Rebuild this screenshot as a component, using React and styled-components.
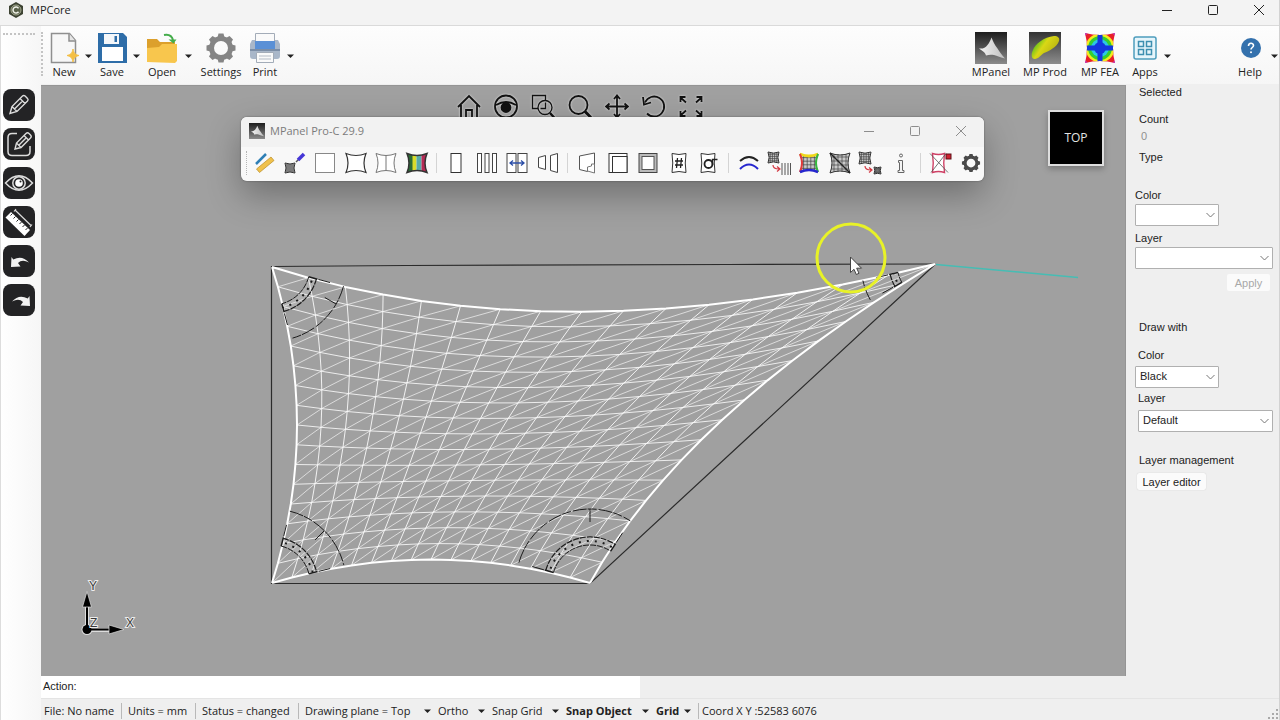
import React from "react";
import styled, { createGlobalStyle, css } from "styled-components";

const ui = `"Open Sans", "Noto Sans", sans-serif`;
const classic = `"Liberation Sans", Arial, sans-serif`;

const GlobalStyle = createGlobalStyle`
  *, *::before, *::after { box-sizing: border-box; }
  body { margin: 0; background: #efefef; color: #222; font: 11px/16px ${ui}; }
  button, select, input { font: inherit; color: inherit; margin: 0; }
  svg { display: block; flex: none; }
`;

const reset = css`
  border: 0;
  padding: 0;
  background: none;
`;

const Shell = styled.div`
  min-height: 100vh;
  display: flex;
  flex-direction: column;
  border-right: 1px solid #d2d2d2;
`;

/* ---------- title bar ---------- */
const TitleBar = styled.header`
  height: 26px;
  padding: 0 0 6px 8px;
  display: flex;
  align-items: center;
  gap: 6px;
  background: #f3f3f3;
  border-bottom: 1px solid #dadada;
`;
const AppTitle = styled.h1`
  flex: 1;
  margin: 0;
  font: 11px/16px ${ui};
`;
const WindowButton = styled.button`
  ${reset}
  width: 46px;
  height: 18px;
  display: grid;
  place-items: center;
  color: ${(p) => (p.$muted ? "#8d8d8d" : "#222")};
`;
const WindowButtons = styled.div`
  display: flex;
  margin-right: ${(p) => p.$inset || 0}px;
`;

/* ---------- frame ---------- */
const Frame = styled.div`
  flex: 1;
  display: flex;
`;
const Rail = styled.nav`
  flex: none;
  width: 41px;
  padding: 7px 0 0 2px;
  background: linear-gradient(90deg, #fff, #f6f6f6);
  border-left: 1px solid #ddd;
  display: flex;
  flex-direction: column;
  gap: 7px;
`;
const RailGrip = styled.div`
  width: 32px;
  height: 49px;
  border-top: 2px dotted #c4c4c4;
`;
const RailButton = styled.button`
  ${reset}
  width: 32px;
  height: 32px;
  border-radius: 8px;
  background: #232325;
  color: #dcdcdc;
  display: grid;
  place-items: center;
`;
const Main = styled.main`
  flex: 1;
  min-width: 0;
  display: flex;
  flex-direction: column;
`;

/* ---------- ribbon ---------- */
const Ribbon = styled.div`
  height: 58px;
  display: flex;
  align-items: flex-start;
  padding-top: 6px;
  background: linear-gradient(#fdfdfd, #f6f6f6);
`;
const RibbonGrip = styled.div`
  width: 5px;
  height: 44px;
  border-left: 2px dotted #c4c4c4;
`;
const RibbonButton = styled.button`
  ${reset}
  flex: none;
  width: ${(p) => p.$w}px;
  display: flex;
  flex-direction: column;
  align-items: center;
  white-space: nowrap;
  line-height: 16px;
`;
const DropButton = styled.button`
  ${reset}
  flex: none;
  width: ${(p) => p.$w || 12}px;
  height: 48px;
  display: grid;
  place-items: center;
`;
const Spacer = styled.div`
  flex: 1;
`;
const HelpGroup = styled.div`
  display: flex;
  margin-left: 58px;
`;

/* ---------- work area ---------- */
const Work = styled.div`
  flex: 1;
  display: flex;
`;
const Canvas = styled.section`
  flex: 1;
  min-width: 0;
  position: relative;
  overflow: hidden;
  margin-top: 1px;
  background: #a0a0a0;
  border-top: 1px solid #959595;
  border-right: 1px solid #959595;
`;
const Drawing = styled.svg`
  position: absolute;
  inset: -1px 0 0 0;
  width: 1085px;
  height: 591px;
`;
const ViewTools = styled.div`
  position: absolute;
  left: 409px;
  top: 8px;
  display: flex;
  filter: drop-shadow(0 0 1px #e4e4e4);
`;
const ViewButton = styled.button`
  ${reset}
  width: 37px;
  height: 26px;
  display: grid;
  place-items: center;
  color: #111;
`;
const ViewCube = styled.button`
  ${reset}
  position: absolute;
  top: 24px;
  right: 21px;
  width: 56px;
  height: 56px;
  border: 2px solid #dedede;
  background: #000;
  color: #e4e4e4;
  font: 12px/16px ${ui};
  box-shadow: 0 3px 6px rgba(0, 0, 0, 0.25);
`;
const Palette = styled.section`
  position: absolute;
  left: 200px;
  top: 31px;
  width: 743px;
  border-radius: 6px;
  overflow: hidden;
  background: #f8f8f8;
`;
const PaletteShadow = styled.div`
  position: absolute;
  left: 200px;
  top: 31px;
  width: 743px;
  height: 64px;
  border-radius: 6px;
  box-shadow: 0 0 2px rgba(0, 0, 0, 0.4), 0 14px 34px rgba(0, 0, 0, 0.3);
`;
const PaletteTitle = styled.div`
  height: 30px;
  padding: 0 0 2px 8px;
  display: flex;
  align-items: center;
  gap: 5px;
  background: #f2f2f2;
  color: #7b7b7b;
`;
const PaletteName = styled.h2`
  flex: 1;
  margin: 0;
  font: 11px/16px ${ui};
`;
const PaletteTools = styled.div`
  height: 34px;
  display: flex;
  align-items: center;
  margin-right: -2px;
  padding: 0 0 2px 5px;
`;
const PaletteGrip = styled.div`
  width: 3px;
  height: 24px;
  border-left: 1px dotted #b5b5b5;
`;
const PaletteButton = styled.button`
  ${reset}
  flex: 1;
  height: 28px;
  display: grid;
  place-items: center;
`;
const Divider = styled.div`
  width: 1px;
  height: 20px;
  margin: 0 4px;
  background: #d4d4d4;
`;

/* ---------- properties ---------- */
const Properties = styled.aside`
  flex: none;
  width: 153px;
  padding: 0 6px 0 9px;
  font: 11px/16px ${classic};
  background: #efefef;
`;
const Group = styled.fieldset`
  border: 0;
  margin: 0;
  padding: 0;
  display: flex;
  flex-direction: column;
  align-items: flex-start;
  min-width: 0;
  min-height: ${(p) => p.$h}px;
`;
const GroupName = styled.legend`
  padding: 0;
  margin: 0 0 ${(p) => p.$gap}px 4px;
`;
const FieldLabel = styled.label`
  margin-left: ${(p) => p.$indent || 0}px;
  margin-top: ${(p) => p.$top || 0}px;
`;
const Value = styled.output`
  margin: 1px 0 5px 6px;
  color: #909090;
`;
const Picker = styled.div`
  position: relative;
  align-self: ${(p) => (p.$wide ? "stretch" : "flex-start")};
  width: ${(p) => (p.$wide ? "auto" : "84px")};
  margin-top: ${(p) => p.$top}px;
  margin-left: ${(p) => p.$indent || 0}px;
`;
const PickerSelect = styled.select`
  appearance: none;
  display: block;
  width: 100%;
  height: 22px;
  padding: 0 16px 2px 4px;
  border: 1px solid #b0b0b0;
  border-radius: 1px;
  background: #fff;
`;
const PickerChevron = styled.svg`
  position: absolute;
  right: 4px;
  top: 8px;
  pointer-events: none;
`;
const PanelButton = styled.button`
  ${reset}
  height: 17px;
  line-height: 16px;
  width: ${(p) => p.$w}px;
  border-radius: 2px;
  background: #fbfbfb;
  box-shadow: 0 0 1px #bbb;
  align-self: ${(p) => (p.$end ? "flex-end" : "flex-start")};
  margin: ${(p) => (p.$end ? "5px 3px 0 0" : "0 0 0 2px")};
  &:disabled { color: #a8a8a8; box-shadow: none; }
`;

/* ---------- bottom bars ---------- */
const ActionRow = styled.div`
  height: 23px;
  display: flex;
  border-bottom: 1px solid #e4e4e4;
  font: 11px/16px ${classic};
`;
const ActionBox = styled.div`
  width: 599px;
  padding: 2px 2px;
  display: flex;
  gap: 4px;
  background: #fff;
`;
const ActionInput = styled.input`
  ${reset}
  flex: 1;
  outline: 0;
`;
const StatusBar = styled.footer`
  height: 21px;
  padding-top: 2px;
  display: flex;
  align-items: center;
  white-space: nowrap;
`;
const StatusCell = styled.div`
  flex: none;
  width: ${(p) => p.$w}px;
  padding-left: ${(p) => p.$pad}px;
  ${(p) => p.$line && "border-right: 1px solid #b9b9b9;"}
`;
const StatusDrop = styled.button`
  ${reset}
  flex: none;
  width: ${(p) => p.$w}px;
  padding-right: 7px;
  display: flex;
  align-items: center;
  justify-content: space-between;
  font-weight: ${(p) => (p.$bold ? 700 : 400)};
`;
const StatusDrops = styled.div`
  display: flex;
  padding-left: 6px;
  border-right: 1px solid #b9b9b9;
`;
const SizeGrip = styled.svg`
  align-self: flex-end;
  margin-left: auto;
`;

/* ---------- small glyphs ---------- */
const Caret = () => (
  <svg width="7" height="4" viewBox="0 0 7 4"><path d="M0 0.500h7L3.500 4z" fill="#222" /></svg>
);
const MinGlyph = () => (
  <svg width="12" height="12" viewBox="0 0 12 12"><path d="M1 6.500h10" stroke="currentColor" /></svg>
);
const MaxGlyph = () => (
  <svg width="12" height="12" viewBox="0 0 12 12"><rect x="1.500" y="1.500" width="9" height="9" rx="1" fill="none" stroke="currentColor" /></svg>
);
const CloseGlyph = () => (
  <svg width="12" height="12" viewBox="0 0 12 12"><path d="M1 1l10 10M11 1L1 11" stroke="currentColor" /></svg>
);
const WindowControls = ({ muted, inset }) => (
  <WindowButtons $inset={inset}>
    <WindowButton $muted={muted} aria-label="Minimize"><MinGlyph /></WindowButton>
    <WindowButton $muted={muted} aria-label="Maximize"><MaxGlyph /></WindowButton>
    <WindowButton $muted={muted} aria-label="Close"><CloseGlyph /></WindowButton>
  </WindowButtons>
);
const Gear = ({ size, color }) => (
  <svg width={size} height={size} viewBox="0 0 32 32">
    <circle cx="16" cy="16" r="9.500" fill="none" stroke={color} strokeWidth="5" />
    {[0, 45, 90, 135, 180, 225, 270, 315].map((a) => (
      <path key={a} d="M12.500 5.500l1-4h5l1 4z" fill={color} transform={`rotate(${a} 16 16)`} />
    ))}
  </svg>
);
const LogoIcon = () => (
  <svg width="16" height="16" viewBox="0 0 16 16">
    <path d="M8 0l7 4v8l-7 4-7-4V4z" fill="#3c4232" />
    <circle cx="8" cy="8" r="5" fill="#59614a" stroke="#a3a88f" />
    <path d="M10.500 6.300a3 3 0 1 0 0 3.400" fill="none" stroke="#f2f3ea" strokeWidth="1.500" />
  </svg>
);
const MPanelIcon = ({ size }) => (
  <svg width={size} height={size} viewBox="0 0 32 32">
    <defs>
      <linearGradient id="mpbg" x1="0" y1="0" x2="0" y2="1"><stop offset="0" stopColor="#1d1d1d" /><stop offset="1" stopColor="#8b8b8b" /></linearGradient>
      <linearGradient id="mpsail" x1="0" y1="0" x2="1" y2="0"><stop offset="0" stopColor="#f5f5f5" /><stop offset="1" stopColor="#bdbdbd" /></linearGradient>
    </defs>
    <rect width="32" height="32" fill="url(#mpbg)" />
    <path d="M16.500 5.500c1.500 3.500 3 7.500 6 11 2 3.500 4.500 6.500 7.500 10-4-1-8-2.500-11-3.500-3-.5-5-.5-8 .5-.5-2-1.500-3-3.500-4.500L4 16.500c4 .5 6-.5 8.500-3.500 2-2.500 3-5 4-7.500z" fill="url(#mpsail)" />
  </svg>
);

/* ---------- ribbon icons ---------- */
const NewIcon = () => (
  <svg width="32" height="32" viewBox="0 0 32 32">
    <path d="M3.500 1.500h18l6 7v22h-24z" fill="#f7f7f7" stroke="#8f8f8f" strokeWidth="1.500" />
    <path d="M21 1.500v7.500h6.500" fill="#e6e6e6" stroke="#8f8f8f" strokeWidth="1.500" />
    <path d="M25 17c.8 4 2 5.500 6 6.500-4 1-5.200 2.500-6 6.500-.8-4-2-5.500-6-6.500 4-1 5.200-2.500 6-6.500z" fill="#f4bf45" stroke="#f4bf45" />
  </svg>
);
const SaveIcon = () => (
  <svg width="32" height="32" viewBox="0 0 32 32">
    <path d="M2 1h25l4 4v26H2z" fill="#2e6da8" />
    <path d="M8 2h15v10H8z" fill="#f4f7fa" />
    <path d="M18.500 4H21v6h-2.500z" fill="#2e6da8" />
    <path d="M6 15h21v14H6z" fill="#fff" />
  </svg>
);
const OpenIcon = () => (
  <svg width="32" height="32" viewBox="0 0 32 32">
    <path d="M1 7h10l3 3h15v20H1z" fill="#dca02c" />
    <path d="M1 30V16l12-1 3-3h15v17l-2 2z" fill="#f8c64d" />
    <path d="M18 3c5-1 8 1 9 5" fill="none" stroke="#45ad4b" strokeWidth="2" />
    <path d="M22.500 7.500h8l-3 4z" fill="#45ad4b" />
  </svg>
);
const PrintIcon = () => (
  <svg width="32" height="32" viewBox="0 0 32 32">
    <path d="M3 8h26l2 4v12q0 3-3 3H4q-3 0-3-3V12z" fill="#a9b7c9" />
    <path d="M1 17h30v2H1z" fill="#7c8ea6" />
    <path d="M6.500 1.500h19V10h-19z" fill="#fafafa" stroke="#a3acb8" />
    <path d="M6 9h20v8H6z" fill="#5a90d6" />
    <path d="M7.500 20.500h17v10h-17z" fill="#fafafa" stroke="#a3acb8" />
    <path d="M10 24h12M10 27h12" stroke="#b5bcc6" />
  </svg>
);
const ProdIcon = () => (
  <svg width="32" height="32" viewBox="0 0 32 32">
    <defs>
      <linearGradient id="pbg" x1="0" y1="0" x2="0" y2="1"><stop offset="0" stopColor="#333" /><stop offset="1" stopColor="#8d8d8d" /></linearGradient>
      <linearGradient id="pfill" x1="0" y1="0" x2="1" y2="0.600"><stop offset="0.150" stopColor="#35b81e" /><stop offset="0.500" stopColor="#d9d815" /><stop offset="1" stopColor="#b3ad12" /></linearGradient>
    </defs>
    <rect width="32" height="32" fill="url(#pbg)" />
    <path d="M4 18c2-6 11-13 21-14 4 0 6 2 5 5-2 6-10 10-15 12-3 2-6 6-9 6-4 0-4-5-2-9z" fill="url(#pfill)" />
  </svg>
);
const FeaIcon = () => (
  <svg width="32" height="32" viewBox="0 0 32 32">
    <defs>
      <clipPath id="feaClip"><path d="M1 1q15 4 30 0-4 15 0 30-15-4-30 0 4-15 0-30z" /></clipPath>
    </defs>
    <g clipPath="url(#feaClip)">
      <rect width="32" height="32" fill="#e8202a" />
      <circle cx="16" cy="16" r="14.500" fill="#f3ec1c" />
      <circle cx="16" cy="16" r="12" fill="#35cf30" />
      <circle cx="16" cy="16" r="9" fill="#2cc7e6" />
      <circle cx="16" cy="16" r="6" fill="#1437e0" />
      <path d="M16 0v32M0 16h32" stroke="#1437e0" strokeWidth="5" />
      <path d="M0 0h5L0 5zM32 0v5l-5-5zM0 32v-5l5 5zM32 32h-5l5-5z" fill="#c03ac0" />
    </g>
  </svg>
);
const AppsIcon = () => (
  <svg width="32" height="32" viewBox="0 0 32 32" fill="none" stroke="#3d8fb0">
    <rect x="5" y="5" width="22" height="22" rx="2" fill="#e6f5fb" stroke="#4e9dbd" strokeWidth="1.500" />
    <g strokeWidth="1.500"><rect x="9.500" y="9.500" width="5" height="5" /><rect x="17.500" y="9.500" width="5" height="5" /><rect x="9.500" y="17.500" width="5" height="5" /><rect x="17.500" y="17.500" width="5" height="5" /></g>
  </svg>
);
const HelpIcon = () => (
  <svg width="32" height="32" viewBox="0 0 32 32">
    <circle cx="17" cy="16" r="10" fill="#3471ad" />
    <path d="M14.500 14c0-3.500 5-3.500 5-.5 0 2-2.500 2-2.500 4" fill="none" stroke="#fff" strokeWidth="1.600" />
    <circle cx="17" cy="20.300" r="1" fill="#fff" />
  </svg>
);

/* ---------- rail icons ---------- */
const pencil = "M-8 8l1.500-6L3-7.500q1.500-1.500 3 0l1.500 1.500q1.500 1.500 0 3L-2 6.500zM-6.500 2L-2 6.500M1-5.500L5.500-1";
const RailIcons = [
  ["Draw", <g key="a" transform="translate(16 15.500)" fill="none" stroke="currentColor" strokeWidth="1.400"><path d="M-9 9l2-7L3.500-8.500q1.300-1.200 2.600 0l2.400 2.400q1.200 1.300 0 2.600L-2 7zM-7 2l5 5M1-6l5 5M-4.500 4.500L3.500-3.500" /></g>],
  ["Edit", <g key="b" fill="none" stroke="currentColor"><path d="M14 5.500H9Q5 5.500 5 9.500v14q0 4 4 4h14q4 0 4-4V18" strokeWidth="1.500" /><g transform="translate(20 13)" strokeWidth="1.400"><path d={pencil} /><path d="M-4.200 4.200L3-3" /></g></g>],
  ["Show", <g key="c" fill="none" stroke="currentColor"><path d="M2.500 16Q16 1.500 29.500 16 16 30.500 2.500 16z" strokeWidth="1.500" /><circle cx="16" cy="16" r="6.200" strokeWidth="1.500" /><circle cx="16" cy="16" r="3.800" fill="#fff" stroke="none" /><circle cx="17.500" cy="14.500" r="1" fill="#222" stroke="none" /></g>],
  ["Measure", <g key="d"><path d="M2.500 11.500L8 6 27 24 21.500 30z" fill="#fff" /><path d="M9.500 7.500l-2 2M12.500 10.500l-2 2M15.500 13.500l-2 2M18.500 16l-2 2M21.500 19l-2 2M24.500 22l-2 2" stroke="#232325" strokeWidth="1" /><path d="M12 4l16 15.500M11 5.500l2-2.500M27 21l2-2.500" stroke="currentColor" fill="none" strokeWidth="1.200" /></g>],
  ["Undo", <path key="e" d="M8.500 12l1.800 2.600q8.500-5 15.700 2.900-7-3.500-11 .5l2.500 3.500-9.500.5z" fill="#f2f2f2" />],
  ["Redo", <path key="f" d="M26.500 12l-1.800 2.600q-8.500-5-15.700 2.900 7-3.500 11 .5l-2.500 3.500 9.500.5z" fill="#f2f2f2" />],
];

/* ---------- view icons ---------- */
const ViewIcons = [
  ["Home", <g key="a"><path d="M1 13L12 2l11 11M4 11v14h16V11" /><path d="M9 25v-9h6v9" /></g>],
  ["Orbit", <g key="b"><circle cx="12" cy="12.500" r="11" /><path d="M2 11q10-6 20 0" /><circle cx="12" cy="13.500" r="4.500" fill="currentColor" /></g>],
  ["Zoom window", <g key="c" strokeWidth="1.300"><path d="M7 14.500H1.500V1.500H14.500V6" /><circle cx="14" cy="13.500" r="7" /><path d="M9.500 14.500h5v-6" /><path d="M19 19l4.500 5" strokeWidth="2.500" /></g>],
  ["Zoom", <g key="d"><circle cx="10.500" cy="11" r="9" /><path d="M17 17.500l6.500 6.500" strokeWidth="3" /></g>],
  ["Pan", <g key="e"><path d="M12 2v21M1.500 12.500h21M9 5l3-3.500L15 5M9 20l3 3.500 3-3.500M4.500 9.500l-3.500 3 3.500 3M19.500 9.500l3.500 3-3.500 3" /></g>],
  ["Rotate", <g key="f"><path d="M3 8.500A10 10 0 1 1 5 19.500" /><path d="M1 3l1 7.500 7-2" /></g>],
  ["Zoom extents", <g key="g"><path d="M1.500 8V3h5M1.500 3.500L7 8.500M22.500 8V3h-5M22.500 3.500L17 8.500M1.500 17v5h5M1.500 21.500L7 16.500M22.500 17v5h-5M22.500 21.500L17 16.500" /></g>],
];

/* ---------- palette icons ---------- */
const grid = (x, y, s) => (
  <>
    <path d={`M${x} ${y}q${s / 2} ${s / 5} ${s} 0-${s / 5} ${s / 2} 0 ${s}-${s / 2}-${s / 5}-${s} 0 ${s / 5}-${s / 2} 0-${s}z`} fill="#c9c9c9" stroke="#333" />
    <path d={[1, 2, 3, 4].map((i) => `M${x + (s * i) / 5} ${y + 1}v${s - 2}M${x + 1} ${y + (s * i) / 5}h${s - 2}`).join("")} stroke="#444" strokeWidth="0.700" fill="none" />
  </>
);
const sail = "M1 1.500q10 4 20 0-4 9.500 0 19-10-4-20 0 4-9.500 0-19z";
const D = "divider";
const PaletteIcons = [
  ["Measure", <g key="1"><path d="M3 12L13 2" stroke="#2f7fb5" strokeWidth="2.500" /><path d="M3.500 17L18 5l3 3.500L6.500 20.500z" fill="#f0c14c" stroke="#b98d25" strokeWidth="0.700" /></g>],
  ["Draw mesh", <g key="2">{grid(1, 11, 10)}<path d="M12 10l3-3" stroke="#555" strokeWidth="1.500" /><path d="M14 8l6-6" stroke="#4536d6" strokeWidth="3.500" /></g>],
  ["Flat panel", <rect key="3" x="1.500" y="1.500" width="19" height="19" fill="#fff" stroke="#888" />],
  ["Sail", <path key="4" d={sail} fill="#fff" stroke="#333" strokeWidth="1.200" />],
  ["Split sail", <g key="5"><path d={sail} fill="#fff" stroke="#777" /><path d="M11 3.500v15" stroke="#777" /></g>],
  ["Colour sail", <g key="6"><clipPath id="cs"><path d={sail} /></clipPath><g clipPath="url(#cs)"><path d="M0 0h7v22H0z" fill="#2b6a36" /><path d="M6.500 0h4v22h-4z" fill="#d9dc2a" /><path d="M10.500 0h5v22h-5z" fill="#58aaa8" /><path d="M15.500 0h7v22h-7z" fill="#b52a55" /></g><path d={sail} fill="none" stroke="#333" strokeWidth="1.500" /></g>],
  D,
  ["Panel", <rect key="7" x="6" y="1.500" width="10" height="19" fill="#fff" stroke="#333" />],
  ["Panels", <g key="8" fill="#fff" stroke="#444"><rect x="1.500" y="1.500" width="4" height="19" /><rect x="9" y="1.500" width="4" height="19" /><rect x="16.500" y="1.500" width="4" height="19" /></g>],
  ["Join panels", <g key="9"><g fill="#fff" stroke="#444"><rect x="1" y="1.500" width="9" height="19" /><rect x="12" y="1.500" width="9" height="19" /></g><path d="M4 11h14M7 8.500L4 11l3 2.500M15 8.500l3 2.500-3 2.500" fill="none" stroke="#2c4fa8" strokeWidth="1.300" /></g>],
  ["Mirror panels", <g key="10" fill="#fff" stroke="#444"><path d="M1.500 5.500l7-2v14l-7-2zM13.500 3.500l7-2v19l-7-2z" /></g>],
  D,
  ["Corner", <g key="11"><path d="M3.500 4l15-3v12l-7 6.500-8-2z" fill="#fff" stroke="#555" /><path d="M18.500 12v9l-7-2v-4l4-1v-2z" fill="#fff" stroke="#777" /></g>],
  ["Hem", <g key="12" fill="#fff" stroke="#333"><rect x="2" y="1.500" width="18" height="19" /><rect x="5.500" y="4.500" width="14.500" height="16" /></g>],
  ["Offset", <g key="13"><rect x="2" y="1.500" width="18" height="19" fill="#bbb" stroke="#444" /><rect x="5" y="4.500" width="12" height="13" fill="#fff" stroke="#555" /></g>],
  ["Number", <g key="14"><path d="M4 1.500q7 2 14 0-1.500 9.500 0 19-7-2-14 0 1.500-9.500 0-19z" fill="#fff" stroke="#333" /><path d="M9.500 6l-1 10M13.500 6l-1 10M7 9h8M7 13h8" stroke="#222" strokeWidth="1.300" /></g>],
  ["Orientation", <g key="15"><path d="M3 1.500q7 2 14 0-1.500 9.500 0 19-7-2-14 0 1.500-9.500 0-19z" fill="#fff" stroke="#333" /><circle cx="10.500" cy="12" r="4" fill="none" stroke="#222" strokeWidth="1.800" /><path d="M14.500 13V7.500h5" stroke="#222" strokeWidth="1.500" fill="none" /></g>],
  D,
  ["Curves", <g key="16" fill="none" strokeWidth="2"><path d="M2 9q9-8 18 0" stroke="#222" /><path d="M2 17q9-9 18 0" stroke="#2626cf" /></g>],
  ["Flatten", <g key="17">{grid(0, 0, 11)}<path d="M5 13q0 4 6 4M9 14.500l3 2.500-3 2.500" stroke="#d33a44" fill="none" strokeWidth="1.200" /><path d="M14 11v12M17 11v12M20 11v12M22.500 11v12" stroke="#555" /></g>],
  ["Stress", <g key="18">{grid(2, 2, 18)}<path d="M2 2q9 4 18 0" stroke="#f0d818" strokeWidth="3" fill="none" /><path d="M2 2q4 9 0 18" stroke="#e23a3a" strokeWidth="2" fill="none" /><path d="M20 2q-4 9 0 18" stroke="#37b83f" strokeWidth="2" fill="none" /><path d="M2 20q9-4 18 0" stroke="#2626cf" strokeWidth="2.500" fill="none" /></g>],
  ["Mesh", <g key="19">{grid(1, 1, 20)}<path d="M1 1l20 20" stroke="#222" strokeWidth="1.500" /></g>],
  ["Convert", <g key="20">{grid(0, 0, 12)}{grid(15, 15, 7)}<path d="M6 14q0 4 6 4M10 15.500l3 2.500-3 2.500" stroke="#d33a44" fill="none" strokeWidth="1.200" /></g>],
  ["Information", <g key="21" fill="#f4f4f4" stroke="#666"><circle cx="11" cy="3.500" r="1.500" /><path d="M8.500 8.500h4v10h1.500v2H8v-2h1.500v-8h-1z" /></g>],
  D,
  ["Delete mesh", <g key="22"><path d="M3.500 1.500q6 2 12 0-1.500 9.500 0 19-6-2-12 0 1.500-9.500 0-19z" fill="#fff" stroke="#cf4065" strokeWidth="1.400" /><path d="M1 1.500l18 19M17 1.500L2 20.500" stroke="#555" strokeWidth="0.800" /><rect x="17" y="2" width="5" height="5" fill="#cf2130" stroke="#5c1018" /></g>],
];

/* ---------- sail drawing ---------- */
const N = 16;
const TL = [272, 267];
const TR = [935, 264];
const BR = [590, 583];
const BL = [272, 583];
const curve = (a, c, b) => (t) => [0, 1].map((k) => (1 - t) ** 2 * a[k] + 2 * t * (1 - t) * c[k] + t * t * b[k]);
const top = curve(TL, [560, 358], TR);
const bottom = curve(BL, [431, 536], BR);
const left = curve(TL, [322, 425], BL);
const right = curve(TR, [682, 416], BR);
const node = (i, j) => {
  const u = i / N;
  const v = j / N;
  const [a, b, c, d] = [top(u), bottom(u), left(v), right(v)];
  return [0, 1]
    .map((k) =>
      (1 - v) * a[k] + v * b[k] + (1 - u) * c[k] + u * d[k] -
      ((1 - u) * (1 - v) * TL[k] + u * (1 - v) * TR[k] + (1 - u) * v * BL[k] + u * v * BR[k]))
    .map((n) => n.toFixed(1))
    .join(" ");
};
const steps = Array.from({ length: N + 1 }, (_, i) => i);
const line = (points) => `M${points.join("L")}`;
const columns = steps.slice(1, N).map((i) => line(steps.map((j) => node(i, j)))).join("");
const rows = steps.slice(1, N).map((j) => line(steps.map((i) => node(i, j)))).join("");
const diagonals = steps.slice(0, N).map((i) => steps.slice(0, N).map((j) => line([node(i, j + 1), node(i + 1, j)])).join("")).join("");
const outline = [
  line(steps.map((i) => node(i, 0))), line(steps.map((i) => node(i, N))),
  line(steps.map((j) => node(0, j))), line(steps.map((j) => node(N, j))),
].join("");

const polar = ([x, y], r, deg) => {
  const a = (deg * Math.PI) / 180;
  return `${(x + r * Math.cos(a)).toFixed(1)} ${(y + r * Math.sin(a)).toFixed(1)}`;
};
const arc = (c, r, from, to) => `M${polar(c, r, from)}A${r} ${r} 0 0 1 ${polar(c, r, to)}`;
const Reinforcement = ({ at, from, to, tick }) => (
  <g fill="none" stroke="#1c1c1c">
    <path d={arc(at, 42, from, to)} stroke="#d8d8d8" strokeOpacity="0.300" strokeWidth="7" />
    <path d={arc(at, 74, from, to)} strokeDasharray="14 1 9 2" />
    <path d={arc(at, 46, from, to)} strokeDasharray="6 1" strokeWidth="1.200" />
    <path d={arc(at, 38, from, to)} strokeDasharray="6 1" />
    <path d={arc(at, 42, from + 4, to)} strokeDasharray="2 6" strokeWidth="2" />
    <path d={`M${polar(at, 38, from)}L${polar(at, 47, from)}M${polar(at, 38, to)}L${polar(at, 47, to)}`} strokeWidth="1.500" />
    <path d={`M${polar(at, 48, from)}L${polar(at, 60, from)}M${polar(at, 48, to)}L${polar(at, 60, to)}`} />
    {tick && <path d={`M${polar(at, 61, tick)}L${polar(at, 74, tick)}`} />}
  </g>
);
const AxisLabel = styled.text`
  font: 12px ${classic};
  fill: #3a3a3a;
  stroke: #ececec;
  stroke-width: 2px;
  paint-order: stroke;
`;

const SailDrawing = () => (
  <Drawing viewBox="41 85 1085 591" role="img" aria-label="Sail mesh">
    <g fill="none" stroke="#2b2b2b">
      <path d="M271.500 266V583.500H590L935 264.500" strokeWidth="1.200" />
      <path d="M272 266.500L406 265.500L728 264.500L935 264" strokeWidth="1.200" />
    </g>
    <path d="M936 264.500L1078 277.500" stroke="#46bdb4" strokeWidth="1.500" />
    <g fill="none" stroke="#fff">
      <path d={diagonals} strokeOpacity="0.620" />
      <path d={rows} strokeOpacity="0.800" />
      <path d={columns} strokeOpacity="0.850" />
      <path d={outline} strokeWidth="2" strokeLinejoin="round" />
    </g>
    <Reinforcement at={TL} from={15} to={75} tick={30} />
    <Reinforcement at={BL} from={-76} to={-14} tick={-45} />
    <Reinforcement at={BR} from={-164} to={-57} tick={-90} />
    <Reinforcement at={TR} from={151} to={167} />
    <g>
      <path d="M87 630V606M87 630h24" stroke="#ddd" strokeWidth="4" />
      <circle cx="87" cy="629.500" r="5.500" fill="#ddd" />
      <path d="M87 629V606M87 629.500h24" stroke="#000" strokeWidth="2" />
      <circle cx="87" cy="629.500" r="4.500" />
      <path d="M82.500 607L87 591.500l4.500 15.500zM109 625l15 4.500-15 4.500z" stroke="#ddd" strokeWidth="0.700" />
      <AxisLabel x="89" y="590">Y</AxisLabel>
      <AxisLabel x="126" y="627">X</AxisLabel>
      <AxisLabel x="90" y="627">Z</AxisLabel>
    </g>
    <circle cx="851" cy="258" r="34" fill="none" stroke="#e8f227" strokeWidth="3" />
    <path d="M850.500 257v15.500l3.500-3.200 2.300 5.200 2.700-1.200-2.300-5.100h4.800z" fill="#fff" stroke="#444" />
  </Drawing>
);

const Select = ({ id, options, wide, gap, indent }) => (
  <Picker $wide={wide} $top={gap} $indent={indent}>
    <PickerSelect id={id} defaultValue={options[0]}>
      {options.map((o) => <option key={o}>{o}</option>)}
    </PickerSelect>
    <PickerChevron width="9" height="7" viewBox="0 0 9 7"><path d="M0.500 1l4 4 4-4" fill="none" stroke="#777" /></PickerChevron>
  </Picker>
);

export default function App() {
  return (
    <Shell>
      <GlobalStyle />
      <TitleBar>
        <LogoIcon />
        <AppTitle>MPCore</AppTitle>
        <WindowControls inset={-3} />
      </TitleBar>
      <Frame>
        <Rail aria-label="Drawing tools">
          <RailGrip />
          {RailIcons.map(([name, art]) => (
            <RailButton key={name} aria-label={name}><svg width="32" height="32" viewBox="0 0 32 32">{art}</svg></RailButton>
          ))}
        </Rail>
        <Main>
          <Ribbon>
            <RibbonGrip />
            <RibbonButton $w={36}><NewIcon />New</RibbonButton><DropButton aria-label="New options"><Caret /></DropButton>
            <RibbonButton $w={36}><SaveIcon />Save</RibbonButton><DropButton aria-label="Save options"><Caret /></DropButton>
            <RibbonButton $w={40}><OpenIcon />Open</RibbonButton><DropButton aria-label="Open options"><Caret /></DropButton>
            <RibbonButton $w={54}><Gear size={32} color="#858585" />Settings</RibbonButton>
            <RibbonButton $w={34}><PrintIcon />Print</RibbonButton><DropButton $w={16} aria-label="Print options"><Caret /></DropButton>
            <Spacer />
            <RibbonButton $w={56}><MPanelIcon size={32} />MPanel</RibbonButton>
            <RibbonButton $w={52}><ProdIcon />MP Prod</RibbonButton>
            <RibbonButton $w={58}><FeaIcon />MP FEA</RibbonButton>
            <RibbonButton $w={32}><AppsIcon />Apps</RibbonButton><DropButton aria-label="Apps options"><Caret /></DropButton>
            <HelpGroup>
              <RibbonButton $w={38}><HelpIcon />Help</RibbonButton><DropButton $w={10} aria-label="Help options"><Caret /></DropButton>
            </HelpGroup>
          </Ribbon>
          <Work>
            <Canvas>
              <PaletteShadow />
              <SailDrawing />
              <ViewTools>
                {ViewIcons.map(([name, art]) => (
                  <ViewButton key={name} aria-label={name}>
                    <svg width="24" height="26" viewBox="0 0 24 26" fill="none" stroke="currentColor" strokeWidth="1.800">{art}</svg>
                  </ViewButton>
                ))}
              </ViewTools>
              <ViewCube>TOP</ViewCube>
              <Palette>
                <PaletteTitle>
                  <MPanelIcon size={16} />
                  <PaletteName>MPanel Pro-C 29.9</PaletteName>
                  <WindowControls muted />
                </PaletteTitle>
                <PaletteTools>
                  <PaletteGrip />
                  {PaletteIcons.map((item, i) =>
                    item === D ? <Divider key={i} /> : (
                      <PaletteButton key={item[0]} aria-label={item[0]}>
                        <svg width="24" height="24" viewBox="-1 -1 24 24" fill="none">{item[1]}</svg>
                      </PaletteButton>
                    ))}
                  <PaletteButton aria-label="Settings"><Gear size={20} color="#4a4a4a" /></PaletteButton>
                </PaletteTools>
              </Palette>
            </Canvas>
            <Properties>
              <Group $h={235}>
                <GroupName $gap={11}>Selected</GroupName>
                <FieldLabel as="span" $indent={4}>Count</FieldLabel>
                <Value>0</Value>
                <FieldLabel as="span" $indent={4}>Type</FieldLabel>
                <FieldLabel htmlFor="sel-color" $top={22}>Color</FieldLabel>
                <Select id="sel-color" options={[""]} gap={1} />
                <FieldLabel htmlFor="sel-layer" $top={4}>Layer</FieldLabel>
                <Select id="sel-layer" options={[""]} wide gap={1} />
                <PanelButton $w={43} $end disabled>Apply</PanelButton>
              </Group>
              <Group $h={133}>
                <GroupName $gap={12}>Draw with</GroupName>
                <FieldLabel htmlFor="draw-color" $indent={3}>Color</FieldLabel>
                <Select id="draw-color" options={["Black"]} gap={3} />
                <FieldLabel htmlFor="draw-layer" $indent={3} $top={2}>Layer</FieldLabel>
                <Select id="draw-layer" options={["Default"]} wide gap={4} indent={3} />
              </Group>
              <Group>
                <GroupName $gap={5}>Layer management</GroupName>
                <PanelButton $w={69}>Layer editor</PanelButton>
              </Group>
            </Properties>
          </Work>
          <ActionRow>
            <ActionBox>
              <label htmlFor="action">Action:</label>
              <ActionInput id="action" />
            </ActionBox>
          </ActionRow>
          <StatusBar>
            <StatusCell $w={81} $pad={3} $line>File: No name</StatusCell>
            <StatusCell $w={74} $pad={6} $line>Units = mm</StatusCell>
            <StatusCell $w={103} $pad={6} $line>Status = changed</StatusCell>
            <StatusDrops>
              <StatusDrop $w={133}>Drawing plane = Top<Caret /></StatusDrop>
              <StatusDrop $w={54}>Ortho<Caret /></StatusDrop>
              <StatusDrop $w={74}>Snap Grid<Caret /></StatusDrop>
              <StatusDrop $w={90} $bold>Snap Object<Caret /></StatusDrop>
              <StatusDrop $w={42} $bold>Grid<Caret /></StatusDrop>
            </StatusDrops>
            <StatusCell $w={130} $pad={3}>Coord X Y :52583 6076</StatusCell>
            <SizeGrip width="12" height="12" viewBox="0 0 12 12"><path d="M9 1h2v2H9zM5 5h2v2H5zM9 5h2v2H9zM1 9h2v2H1zM5 9h2v2H5zM9 9h2v2H9z" fill="#a9a9a9" /></SizeGrip>
          </StatusBar>
        </Main>
      </Frame>
    </Shell>
  );
}
